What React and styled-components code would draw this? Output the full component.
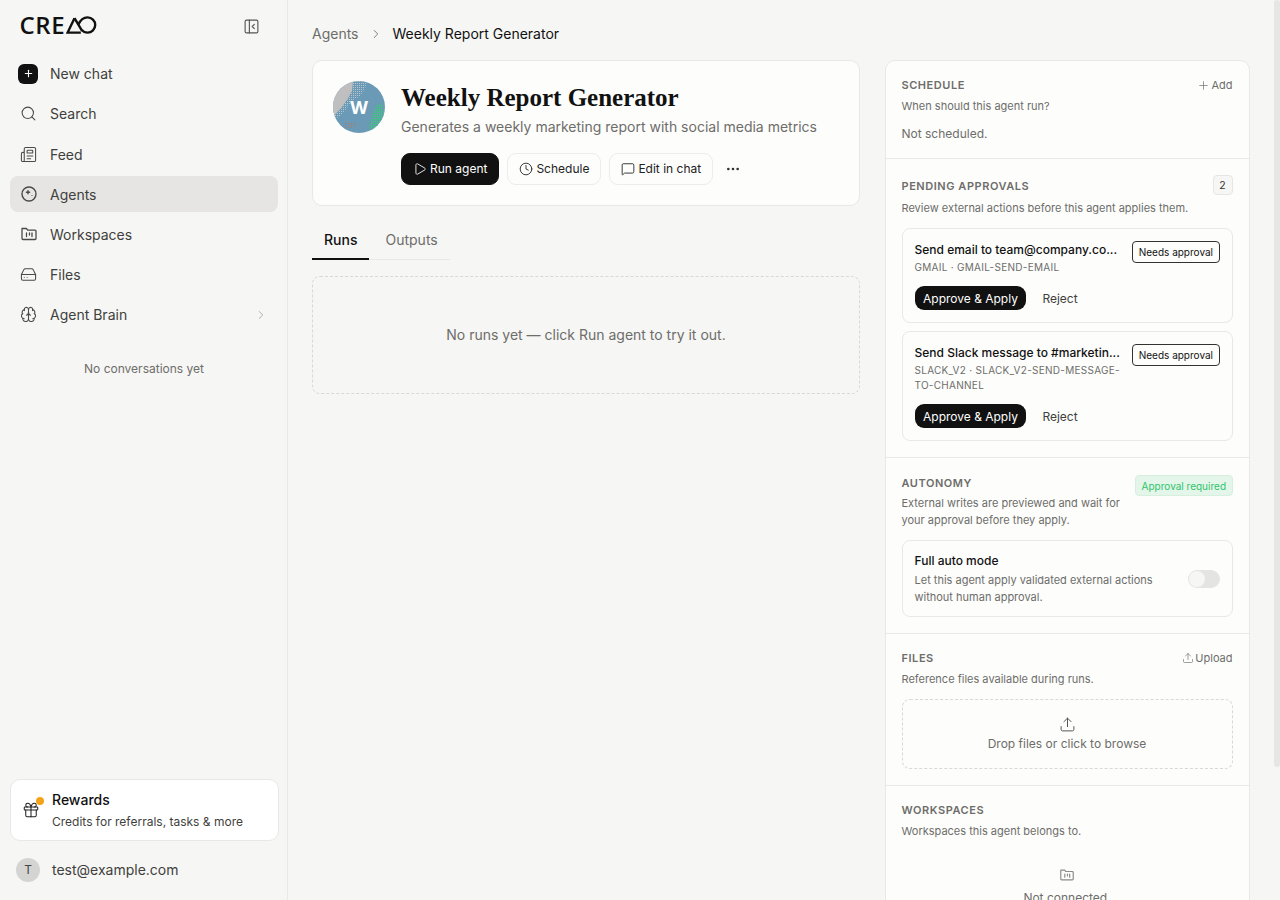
import React from 'react';
import styled, { createGlobalStyle } from 'styled-components';
import {
  Search,
  Newspaper,
  ChevronRight,
  Plus,
  Play,
  Clock,
  MessageSquare,
  Ellipsis,
  Upload,
  Gift,
  HardDrive,
  Brain,
  PanelLeftClose,
} from 'lucide-react';

const GlobalStyle = createGlobalStyle`
  html, body {
    margin: 0;
    padding: 0;
    height: 100%;
    overflow: hidden;
    background: #f6f6f4;
    font-family: Inter, "Liberation Sans", sans-serif;
    color: #111;
  }
  * { box-sizing: border-box; }
`;

const Page = styled.div`
  display: flex;
  width: 1280px;
  height: 900px;
  overflow: hidden;
`;

/* sidebar */
const Sidebar = styled.aside`
  width: 288px;
  flex: none;
  height: 900px;
  border-right: 1px solid #e8e8e6;
  padding: 0 9px 0 10px;
  display: flex;
  flex-direction: column;
`;

const LogoRow = styled.div`
  height: 52.7px;
  display: flex;
  align-items: center;
  justify-content: space-between;
  padding: 0 18px 0 9.5px;
`;

const Logo = styled.div`
  display: flex;
  align-items: center;
  gap: 1px;
  margin-top: -2px;
  color: #111;
`;

const LogoText = styled.span`
  font-family: "Open Sans", sans-serif;
  font-size: 24px;
  font-weight: 600;
  line-height: 24px;
  letter-spacing: 0.6px;
`;

const NavList = styled.nav`
  display: flex;
  flex-direction: column;
  padding-top: 3px;
`;

const NavItem = styled.div`
  height: 36px;
  margin-bottom: 4.2px;
  display: flex;
  align-items: center;
  gap: 12px;
  padding: 0 10px 0 9px;
  border-radius: 8px;
  font-size: 14px;
  color: #3f3f3d;
  background: ${(props) => (props.$active ? '#e6e5e3' : 'transparent')};
`;

const NavIcon = styled.span`
  width: 19px;
  height: 19px;
  flex: none;
  display: flex;
  align-items: center;
  justify-content: center;
  color: #4a4a48;
`;

const NewChatIcon = styled.span`
  width: 20px;
  height: 20px;
  flex: none;
  margin-left: -1px;
  display: flex;
  align-items: center;
  justify-content: center;
  background: #111;
  color: #fff;
  border-radius: 6px;
`;

const NavEnd = styled.span`
  margin-left: auto;
  display: flex;
  color: #a3a3a0;
`;

const EmptyNote = styled.div`
  margin-top: 21.5px;
  text-align: center;
  font-size: 12px;
  line-height: 20px;
  color: #6d6d6a;
`;

const SidebarFoot = styled.div`
  margin-top: auto;
  display: flex;
  flex-direction: column;
`;

const RewardsCard = styled.div`
  height: 62px;
  margin: 0 -0.5px;
  background: #fff;
  border: 1px solid #e8e8e6;
  border-radius: 10px;
  display: flex;
  align-items: center;
  gap: 12.5px;
  padding: 0 11px;
`;

const GiftWrap = styled.span`
  position: relative;
  display: flex;
  width: 18px;
  height: 18px;
  color: #222;
`;

const Dot = styled.span`
  position: absolute;
  top: -4px;
  right: -4px;
  width: 8px;
  height: 8px;
  border-radius: 50%;
  background: #f5a31a;
`;

const RewardsText = styled.div`
  display: flex;
  flex-direction: column;
  gap: 5px;
`;

const RewardsTitle = styled.div`
  font-size: 14px;
  font-weight: 500;
  line-height: 18px;
  color: #111;
`;

const RewardsSub = styled.div`
  font-size: 12px;
  line-height: 16px;
  color: #3f3f3d;
`;

const UserRow = styled.div`
  height: 59px;
  display: flex;
  align-items: center;
  gap: 12px;
  padding: 0 6px 2px 6px;
  font-size: 14px;
  color: #3f3f3d;
`;

const Avatar = styled.span`
  width: 24px;
  height: 24px;
  border-radius: 50%;
  background: #d4d4d2;
  display: flex;
  align-items: center;
  justify-content: center;
  font-size: 12px;
  color: #444;
`;

/* main */
const Main = styled.main`
  flex: 1;
  min-width: 0;
  height: 900px;
  overflow: hidden;
  padding: 0 0 0 24px;
  display: flex;
  flex-direction: column;
  position: relative;
`;

const Breadcrumb = styled.div`
  height: 60px;
  flex: none;
  padding-top: 7px;
  display: flex;
  align-items: center;
  font-size: 14px;
`;

const Crumb = styled.span`
  color: ${(props) => (props.$current ? '#111' : '#6d6d6a')};
`;

const CrumbSep = styled.span`
  display: flex;
  margin: 0 10px;
  color: #6d6d6a;
`;

const Columns = styled.div`
  display: flex;
  align-items: flex-start;
  gap: 24.5px;
`;

const LeftColumn = styled.div`
  width: 548px;
  flex: none;
`;

const HeaderCard = styled.section`
  height: 146px;
  background: #fdfdfc;
  border: 1px solid #e8e8e6;
  border-radius: 10px;
  padding: 20px;
  display: flex;
  gap: 16px;
`;

const AgentAvatar = styled.div`
  position: relative;
  width: 52px;
  height: 52px;
  flex: none;
  border-radius: 50%;
  overflow: hidden;
`;

const AgentInitial = styled.span`
  position: absolute;
  inset: 0;
  display: flex;
  align-items: center;
  justify-content: center;
  color: #fff;
  font-size: 18px;
  font-weight: 700;
`;

const HeaderBody = styled.div`
  display: flex;
  flex-direction: column;
  min-width: 0;
`;

const Title = styled.h1`
  margin: 1px 0 0;
  font-family: "Liberation Serif", serif;
  font-size: 25px;
  font-weight: 700;
  line-height: 32px;
  color: #111;
`;

const Subtitle = styled.p`
  margin: 2px 0 0;
  font-size: 14px;
  line-height: 22px;
  color: #6d6d6a;
`;

const Actions = styled.div`
  margin-top: 15px;
  display: flex;
  align-items: center;
  gap: 8px;
`;

const ActionButton = styled.button`
  height: 32px;
  display: flex;
  align-items: center;
  gap: 3px;
  padding: 0 11px 1px;
  border-radius: 9px;
  font-family: inherit;
  font-size: 12px;
  border: 1px solid ${(props) => (props.$primary ? '#111' : '#ececea')};
  background: ${(props) => (props.$primary ? '#111' : '#fdfdfc')};
  color: ${(props) => (props.$primary ? '#fff' : '#222')};
`;

const MoreButton = styled.span`
  display: flex;
  margin-left: 4px;
  color: #333;
`;

const Tabs = styled.div`
  margin-top: 16px;
  display: flex;
  width: 138px;
  border-bottom: 1px solid #e8e8e6;
`;

const Tab = styled.div`
  height: 38px;
  padding: 0 12px 2px;
  display: flex;
  align-items: center;
  margin-bottom: -1px;
  margin-right: ${(props) => (props.$active ? '4px' : '0')};
  font-size: 14px;
  font-weight: ${(props) => (props.$active ? 500 : 400)};
  color: ${(props) => (props.$active ? '#111' : '#6d6d6a')};
  border-bottom: 2px solid ${(props) => (props.$active ? '#111' : 'transparent')};
`;

const RunsEmpty = styled.div`
  margin-top: 16px;
  height: 118px;
  padding-bottom: 2px;
  border: 1px dashed #d8d8d5;
  border-radius: 8px;
  display: flex;
  align-items: center;
  justify-content: center;
  font-size: 14px;
  color: #6d6d6a;
`;

/* right panel */
const Panel = styled.aside`
  width: 365px;
  flex: none;
  background: #fdfdfc;
  border: 1px solid #e8e8e6;
  border-radius: 10px 10px 0 0;
`;

const PanelSection = styled.section`
  padding: ${(props) => props.$pad || '16px'};
  border-bottom: ${(props) => (props.$last ? 'none' : '1px solid #e8e8e6')};
`;

const SectionHead = styled.div`
  display: flex;
  align-items: flex-start;
  justify-content: space-between;
  gap: 12px;
`;

const SectionTitle = styled.h2`
  margin: 0;
  font-size: 11px;
  font-weight: 600;
  line-height: 16px;
  letter-spacing: 0.55px;
  text-transform: uppercase;
  color: #6d6d6a;
`;

const SectionText = styled.p`
  margin: ${(props) => props.$margin || '5px 0 0'};
  font-size: 11px;
  line-height: 17px;
  color: #6d6d6a;
`;

const HeadLink = styled.span`
  display: flex;
  align-items: center;
  gap: 1px;
  font-size: 11px;
  line-height: 16px;
  color: #6d6d6a;
`;

const NotScheduled = styled.p`
  margin: 10px 0 0;
  font-size: 12px;
  line-height: 18px;
  color: #6d6d6a;
`;

const CountBadge = styled.span`
  width: 20px;
  height: 20px;
  margin: -3px 0 -4px;
  border: 1px solid #e6e6e4;
  border-radius: 4px;
  background: #f6f6f4;
  display: flex;
  align-items: center;
  justify-content: center;
  font-size: 10.5px;
  color: #333;
`;

const ApprovalCard = styled.div`
  margin-top: ${(props) => props.$mt || '0'};
  border: 1px solid #e8e8e6;
  border-radius: 8px;
  padding: 12px;
`;

const ApprovalHead = styled.div`
  display: flex;
  align-items: flex-start;
  justify-content: space-between;
  gap: 10px;
`;

const ApprovalInfo = styled.div`
  min-width: 0;
  flex: 1;
`;

const ApprovalTitle = styled.div`
  font-size: 12px;
  font-weight: 500;
  line-height: 18px;
  color: #111;
  white-space: nowrap;
  overflow: hidden;
  text-overflow: ellipsis;
`;

const ApprovalMeta = styled.div`
  margin-top: 1px;
  font-size: 10px;
  line-height: 15px;
  letter-spacing: 0.28px;
  color: #6d6d6a;
`;

const NeedsBadge = styled.span`
  flex: none;
  height: 22px;
  padding: 0 5.5px;
  border: 1px solid #333;
  border-radius: 4px;
  display: flex;
  align-items: center;
  font-size: 10px;
  color: #111;
`;

const ApprovalActions = styled.div`
  margin-top: 11px;
  display: flex;
  align-items: center;
  gap: 16px;
`;

const ApproveButton = styled.button`
  height: 24px;
  padding: 0 8.5px;
  border: none;
  border-radius: 9px;
  background: #111;
  color: #fff;
  font-family: inherit;
  font-size: 12px;
`;

const RejectButton = styled.span`
  font-size: 12px;
  color: #3f3f3d;
`;

const GreenBadge = styled.span`
  flex: none;
  height: 21px;
  padding: 0 5.5px;
  border: 1px solid #d7efdf;
  border-radius: 4px;
  background: #e4f5ea;
  display: flex;
  align-items: center;
  font-size: 10px;
  color: #2fc46b;
`;

const AutoCard = styled.div`
  margin-top: 11px;
  height: 77px;
  border: 1px solid #e8e8e6;
  border-radius: 8px;
  padding: 0 12px;
  display: flex;
  align-items: center;
  justify-content: space-between;
  gap: 12px;
`;

const AutoTitle = styled.div`
  font-size: 12px;
  font-weight: 500;
  line-height: 18px;
  color: #111;
`;

const AutoText = styled.div`
  margin-top: 2px;
  font-size: 11px;
  line-height: 17px;
  color: #6d6d6a;
`;

const Toggle = styled.span`
  flex: none;
  width: 32px;
  height: 18px;
  padding: 1px;
  border-radius: 9px;
  background: #e4e4e2;
  display: flex;
`;

const ToggleKnob = styled.span`
  width: 16px;
  height: 16px;
  border-radius: 50%;
  background: #f6f6f4;
`;

const DropZone = styled.div`
  margin-top: 11px;
  height: 70px;
  border: 1px dashed #d8d8d5;
  border-radius: 8px;
  display: flex;
  flex-direction: column;
  align-items: center;
  justify-content: center;
  gap: 2px;
  font-size: 12px;
  line-height: 18px;
  color: #6d6d6a;
`;

const DropIcon = styled.span`
  display: flex;
  color: #555;
`;

const EmptyBlock = styled.div`
  margin-top: 27px;
  display: flex;
  flex-direction: column;
  align-items: center;
  gap: 6px;
  font-size: 12px;
  line-height: 18px;
  color: #6d6d6a;
`;

const EmptyIcon = styled.span`
  display: flex;
  color: #8a8a87;
`;

const Scrollbar = styled.div`
  position: absolute;
  top: 0;
  right: 0;
  width: 6.5px;
  height: 767px;
  background: #e6e6e4;
  border-radius: 3px;
`;

const iconProps = { size: 17, strokeWidth: 1.5 };

function AgentsIcon() {
  return (
    <svg width="18" height="18" viewBox="0 0 18 18" fill="none" stroke="currentColor" strokeWidth="1.4">
      <circle cx="9" cy="9" r="7" />
      <path d="M8 5.6v3.2M6.4 7.2h3.2" strokeLinecap="round" />
      <circle cx="12" cy="10.5" r="0.6" fill="currentColor" stroke="none" />
    </svg>
  );
}

function FolderIcon({ size = 18 }) {
  return (
    <svg width={size} height={size} viewBox="0 0 18 18" fill="none" stroke="currentColor" strokeWidth="1.3" strokeLinejoin="round">
      <path d="M2 3.5h4.4l1.3 1.6H15a1 1 0 0 1 1 1v7.4a1 1 0 0 1-1 1H3a1 1 0 0 1-1-1z" />
      <path d="M6.5 8v3.5M9.5 8v2M12 8v3.5" strokeLinecap="round" />
    </svg>
  );
}

function LogoMark() {
  return (
    <svg width="31" height="18" viewBox="0 0 31 18" fill="none" stroke="currentColor" strokeWidth="2.4">
      <path d="M8.5 2.2L1.6 16.6h13.2" />
      <path d="M8.5 2.2l7.6 12.6" />
      <path d="M12.4 8.6C14.4 4 17.6 1.4 21.6 1.4a7.6 7.6 0 0 1 0 15.2c-2.8 0-4.6-1.2-5.8-2.6" />
    </svg>
  );
}

function AvatarArt() {
  return (
    <svg width="52" height="52" viewBox="0 0 52 52">
      <defs>
        <pattern id="dotLight" width="2" height="2" patternUnits="userSpaceOnUse">
          <rect width="1" height="1" fill="#b9c6cf" />
        </pattern>
        <pattern id="dotGreen" width="2" height="2" patternUnits="userSpaceOnUse">
          <rect width="1" height="1" fill="#2fd36f" />
        </pattern>
        <pattern id="dotBrown" width="3" height="2" patternUnits="userSpaceOnUse">
          <rect width="1.2" height="1.2" fill="#a27c6e" />
        </pattern>
      </defs>
      <rect width="52" height="52" fill="#6b9ab6" />
      <path d="M0 0h20l-1 10-5 9-6 8-8 9z" fill="#bfbfc0" />
      <path d="M20 0h14l-2 8-5 7-8 5-5 7-6 7-8 6v-4l8-9 6-8 5-9 1-10z" fill="url(#dotLight)" />
      <path d="M50 22l-6 2-4 8-2 8-2 8 16 4z" fill="#4fb08f" opacity="0.35" />
      <path d="M50 22l-6 2-4 8-2 8-2 8 16 4z" fill="url(#dotGreen)" />
      <path d="M10 41h15l-4 6H12z" fill="url(#dotBrown)" />
    </svg>
  );
}

const navItems = [
  { label: 'Search', icon: <Search {...iconProps} /> },
  { label: 'Feed', icon: <Newspaper {...iconProps} /> },
  { label: 'Agents', icon: <AgentsIcon />, active: true },
  { label: 'Workspaces', icon: <FolderIcon /> },
  { label: 'Files', icon: <HardDrive {...iconProps} /> },
  { label: 'Agent Brain', icon: <Brain {...iconProps} />, more: true },
];

function App() {
  return (
    <Page>
      <GlobalStyle />
      <Sidebar>
        <LogoRow>
          <Logo>
            <LogoText>CRE</LogoText>
            <LogoMark />
          </Logo>
          <PanelLeftClose size={17} strokeWidth={1.6} color="#555" />
        </LogoRow>
        <NavList>
          <NavItem>
            <NewChatIcon>
              <Plus size={11} strokeWidth={2.4} />
            </NewChatIcon>
            New chat
          </NavItem>
          {navItems.map((item) => (
            <NavItem key={item.label} $active={item.active}>
              <NavIcon>{item.icon}</NavIcon>
              {item.label}
              {item.more && (
                <NavEnd>
                  <ChevronRight size={14} strokeWidth={1.5} />
                </NavEnd>
              )}
            </NavItem>
          ))}
        </NavList>
        <EmptyNote>No conversations yet</EmptyNote>
        <SidebarFoot>
          <RewardsCard>
            <GiftWrap>
              <Gift size={18} strokeWidth={1.4} />
              <Dot />
            </GiftWrap>
            <RewardsText>
              <RewardsTitle>Rewards</RewardsTitle>
              <RewardsSub>Credits for referrals, tasks &amp; more</RewardsSub>
            </RewardsText>
          </RewardsCard>
          <UserRow>
            <Avatar>T</Avatar>
            test@example.com
          </UserRow>
        </SidebarFoot>
      </Sidebar>

      <Main>
        <Breadcrumb>
          <Crumb>Agents</Crumb>
          <CrumbSep>
            <ChevronRight size={14} strokeWidth={1.5} />
          </CrumbSep>
          <Crumb $current>Weekly Report Generator</Crumb>
        </Breadcrumb>
        <Columns>
          <LeftColumn>
            <HeaderCard>
              <AgentAvatar>
                <AvatarArt />
                <AgentInitial>W</AgentInitial>
              </AgentAvatar>
              <HeaderBody>
                <Title>Weekly Report Generator</Title>
                <Subtitle>Generates a weekly marketing report with social media metrics</Subtitle>
                <Actions>
                  <ActionButton $primary>
                    <Play size={14} strokeWidth={1.5} />
                    Run agent
                  </ActionButton>
                  <ActionButton>
                    <Clock size={14} strokeWidth={1.5} />
                    Schedule
                  </ActionButton>
                  <ActionButton>
                    <MessageSquare size={14} strokeWidth={1.5} />
                    Edit in chat
                  </ActionButton>
                  <MoreButton>
                    <Ellipsis size={16} strokeWidth={2} />
                  </MoreButton>
                </Actions>
              </HeaderBody>
            </HeaderCard>
            <Tabs>
              <Tab $active>Runs</Tab>
              <Tab>Outputs</Tab>
            </Tabs>
            <RunsEmpty>No runs yet — click Run agent to try it out.</RunsEmpty>
          </LeftColumn>

          <Panel>
            <PanelSection $pad="16px 16px 15px">
              <SectionHead>
                <SectionTitle>Schedule</SectionTitle>
                <HeadLink>
                  <Plus size={13} strokeWidth={1.3} />
                  Add
                </HeadLink>
              </SectionHead>
              <SectionText>When should this agent run?</SectionText>
              <NotScheduled>Not scheduled.</NotScheduled>
            </PanelSection>

            <PanelSection $pad="19px 16px 16px">
              <SectionHead>
                <SectionTitle>Pending approvals</SectionTitle>
                <CountBadge>2</CountBadge>
              </SectionHead>
              <SectionText $margin="6px 0 11px">Review external actions before this agent applies them.</SectionText>
              <ApprovalCard>
                <ApprovalHead>
                  <ApprovalInfo>
                    <ApprovalTitle>Send email to team@company.co...</ApprovalTitle>
                    <ApprovalMeta>GMAIL · GMAIL-SEND-EMAIL</ApprovalMeta>
                  </ApprovalInfo>
                  <NeedsBadge>Needs approval</NeedsBadge>
                </ApprovalHead>
                <ApprovalActions>
                  <ApproveButton>Approve &amp; Apply</ApproveButton>
                  <RejectButton>Reject</RejectButton>
                </ApprovalActions>
              </ApprovalCard>
              <ApprovalCard $mt="8px">
                <ApprovalHead>
                  <ApprovalInfo>
                    <ApprovalTitle>Send Slack message to #marketin...</ApprovalTitle>
                    <ApprovalMeta>SLACK_V2 · SLACK_V2-SEND-MESSAGE-TO-CHANNEL</ApprovalMeta>
                  </ApprovalInfo>
                  <NeedsBadge>Needs approval</NeedsBadge>
                </ApprovalHead>
                <ApprovalActions>
                  <ApproveButton>Approve &amp; Apply</ApproveButton>
                  <RejectButton>Reject</RejectButton>
                </ApprovalActions>
              </ApprovalCard>
            </PanelSection>

            <PanelSection $pad="17px 16px 16px">
              <SectionHead>
                <div>
                  <SectionTitle>Autonomy</SectionTitle>
                  <SectionText $margin="4px 0 0">External writes are previewed and wait for your approval before they apply.</SectionText>
                </div>
                <GreenBadge>Approval required</GreenBadge>
              </SectionHead>
              <AutoCard>
                <div>
                  <AutoTitle>Full auto mode</AutoTitle>
                  <AutoText>Let this agent apply validated external actions without human approval.</AutoText>
                </div>
                <Toggle>
                  <ToggleKnob />
                </Toggle>
              </AutoCard>
            </PanelSection>

            <PanelSection>
              <SectionHead>
                <SectionTitle>Files</SectionTitle>
                <HeadLink>
                  <Upload size={12} strokeWidth={1.3} />
                  Upload
                </HeadLink>
              </SectionHead>
              <SectionText>Reference files available during runs.</SectionText>
              <DropZone>
                <DropIcon>
                  <Upload size={17} strokeWidth={1.4} />
                </DropIcon>
                Drop files or click to browse
              </DropZone>
            </PanelSection>

            <PanelSection $last>
              <SectionTitle>Workspaces</SectionTitle>
              <SectionText>Workspaces this agent belongs to.</SectionText>
              <EmptyBlock>
                <EmptyIcon>
                  <FolderIcon size={16} />
                </EmptyIcon>
                Not connected.
              </EmptyBlock>
            </PanelSection>
          </Panel>
        </Columns>
        <Scrollbar />
      </Main>
    </Page>
  );
}

export default App;
